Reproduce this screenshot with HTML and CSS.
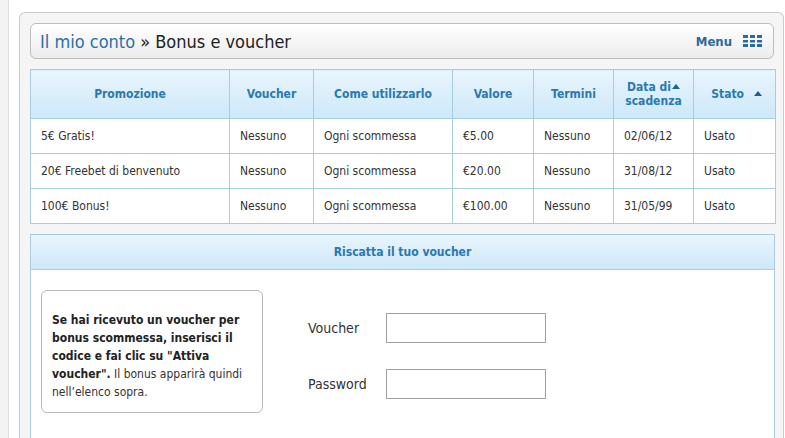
FILE: index.html
```html
<!DOCTYPE html>
<html lang="it">
<head>
<meta charset="utf-8">
<title>Bonus e voucher</title>
<link rel="stylesheet" href="styles.css">
</head>
<body>
<div class="page">
  <div class="strip"></div>
  <div class="main">
    <div class="panel">
      <div class="titlebar">
        <h1 class="title"><a class="crumb" href="#">Il mio conto</a> » Bonus e voucher</h1>
        <a class="menu" href="#">Menu
          <svg class="menu-icon" width="19" height="12" viewBox="0 0 19 12">
            <g fill="#2a6a9c">
              <rect x="0" y="0" width="5" height="3"/><rect x="7" y="0" width="5" height="3"/><rect x="14" y="0" width="5" height="3"/>
              <rect x="0" y="5" width="5" height="2.5"/><rect x="7" y="5" width="5" height="2.5"/><rect x="14" y="5" width="5" height="2.5"/>
              <rect x="0" y="9" width="5" height="3"/><rect x="7" y="9" width="5" height="3"/><rect x="14" y="9" width="5" height="3"/>
            </g>
          </svg>
        </a>
      </div>

      <table class="grid">
        <colgroup>
          <col class="c1"><col class="c2"><col class="c3"><col class="c4"><col class="c5"><col class="c6"><col class="c7">
        </colgroup>
        <thead>
          <tr>
            <th>Promozione</th>
            <th>Voucher</th>
            <th>Come utilizzarlo</th>
            <th>Valore</th>
            <th>Termini</th>
            <th>Data di<span class="arrow"></span><br>scadenza</th>
            <th class="th-stato">Stato <span class="arrow wide"></span></th>
          </tr>
        </thead>
        <tbody>
          <tr><td>5€ Gratis!</td><td>Nessuno</td><td>Ogni scommessa</td><td>€5.00</td><td>Nessuno</td><td>02/06/12</td><td>Usato</td></tr>
          <tr><td>20€ Freebet di benvenuto</td><td>Nessuno</td><td>Ogni scommessa</td><td>€20.00</td><td>Nessuno</td><td>31/08/12</td><td>Usato</td></tr>
          <tr><td>100€ Bonus!</td><td>Nessuno</td><td>Ogni scommessa</td><td>€100.00</td><td>Nessuno</td><td>31/05/99</td><td>Usato</td></tr>
        </tbody>
      </table>

      <section class="redeem">
        <div class="redeem-head">Riscatta il tuo voucher</div>
        <div class="redeem-body">
          <p class="info"><b>Se hai ricevuto un voucher per bonus scommessa, inserisci il codice e fai clic su "Attiva voucher".</b> Il bonus apparirà quindi nell’elenco sopra.</p>
          <form class="form">
            <label class="row"><span class="lbl">Voucher</span><input class="field" type="text"></label>
            <label class="row"><span class="lbl">Password</span><input class="field" type="password"></label>
          </form>
        </div>
      </section>
    </div>
  </div>
</div>
</body>
</html>
```

FILE: styles.css
```css
html, body {
  margin: 0;
  padding: 0;
  background: #ffffff;
  overflow: hidden;
}
body {
  font-family: Tahoma, "DejaVu Sans Condensed", "DejaVu Sans", sans-serif;
  font-size: 12px;
  color: #333;
}
.page {
  display: flex;
  height: 438px;
}
.strip {
  width: 8px;
  flex: none;
  background: #f3f3f3;
  border-right: 1px solid #dcdcdc;
}
.main {
  flex: 1;
  padding: 12px 0 0 10px;
  background: #ffffff;
}
.panel {
  width: 765px;
  height: 100%;
  box-sizing: border-box;
  border: 1px solid #cacaca;
  border-bottom: none;
  border-radius: 6px 6px 0 0;
  background: #f5f5f5;
  padding: 10px 8px 0 10px;
}
.titlebar {
  display: flex;
  align-items: center;
  justify-content: space-between;
  height: 36px;
  box-sizing: border-box;
  border: 1px solid #bdbdbd;
  border-radius: 6px;
  background: linear-gradient(#ffffff, #ececec);
  padding: 0 11px 0 9px;
  margin-right: 1px;
  margin-bottom: 10px;
}
.title {
  margin: 0;
  font-size: 18px;
  font-weight: normal;
  color: #222;
}
.crumb {
  color: #2a70a8;
  text-decoration: none;
}
.menu {
  display: flex;
  align-items: center;
  gap: 11px;
  color: #2a6a9c;
  font-weight: bold;
  font-size: 13px;
  text-decoration: none;
}
.menu-icon {
  display: block;
}
.grid {
  width: 745px;
  border-collapse: collapse;
  table-layout: fixed;
  background: #fff;
}
.c1 { width: 199px; }
.c2 { width: 84px; }
.c3 { width: 139px; }
.c4 { width: 81px; }
.c5 { width: 80px; }
.c6 { width: 80px; }
.c7 { width: 82px; }
.grid th, .grid td {
  border: 1px solid #a8cde0;
}
.grid th {
  height: 48px;
  padding: 0;
  background: linear-gradient(#e9f5fd, #cde8f9);
  color: #2a79b0;
  font-size: 12px;
  font-weight: bold;
  line-height: 14px;
  text-align: center;
  vertical-align: middle;
}
.grid th.th-stato {
  padding-left: 4px;
}
.grid td {
  height: 34px;
  padding: 0 10px;
  color: #333;
  line-height: 14px;
  white-space: nowrap;
}
.arrow {
  display: inline-block;
  width: 0;
  height: 0;
  border-left: 4px solid transparent;
  border-right: 4px solid transparent;
  border-bottom: 5px solid #1e5f90;
  vertical-align: 2px;
  margin-left: 1px;
}
.arrow.wide {
  margin-left: 6px;
}
.redeem {
  margin-top: 10px;
  width: 745px;
  box-sizing: border-box;
  border: 1px solid #a8cde0;
  border-bottom: none;
  background: #fff;
  height: 210px;
}
.redeem-head {
  height: 34px;
  line-height: 34px;
  text-align: center;
  font-weight: bold;
  color: #2a79b0;
  background: linear-gradient(#e9f5fd, #cde8f9);
  border-bottom: 1px solid #a8cde0;
}
.redeem-body {
  display: flex;
  align-items: flex-start;
  padding: 20px 10px;
}
.info {
  margin: 0;
  width: 222px;
  box-sizing: border-box;
  border: 1px solid #b9b9b9;
  border-radius: 6px;
  padding: 20px 10px 11px 10px;
  line-height: 18px;
  font-size: 12px;
  color: #333;
}
.info b {
  color: #222;
}
.form {
  margin: 23px 0 0 45px;
  display: flex;
  flex-direction: column;
  gap: 26px;
}
.row {
  display: flex;
  align-items: center;
}
.lbl {
  width: 78px;
  font-size: 14px;
  color: #333;
}
.field {
  width: 160px;
  height: 30px;
  box-sizing: border-box;
  border: 1px solid #a0a0a0;
  margin: 0;
  padding: 2px 4px;
  background: #fff;
  font: inherit;
}
```
